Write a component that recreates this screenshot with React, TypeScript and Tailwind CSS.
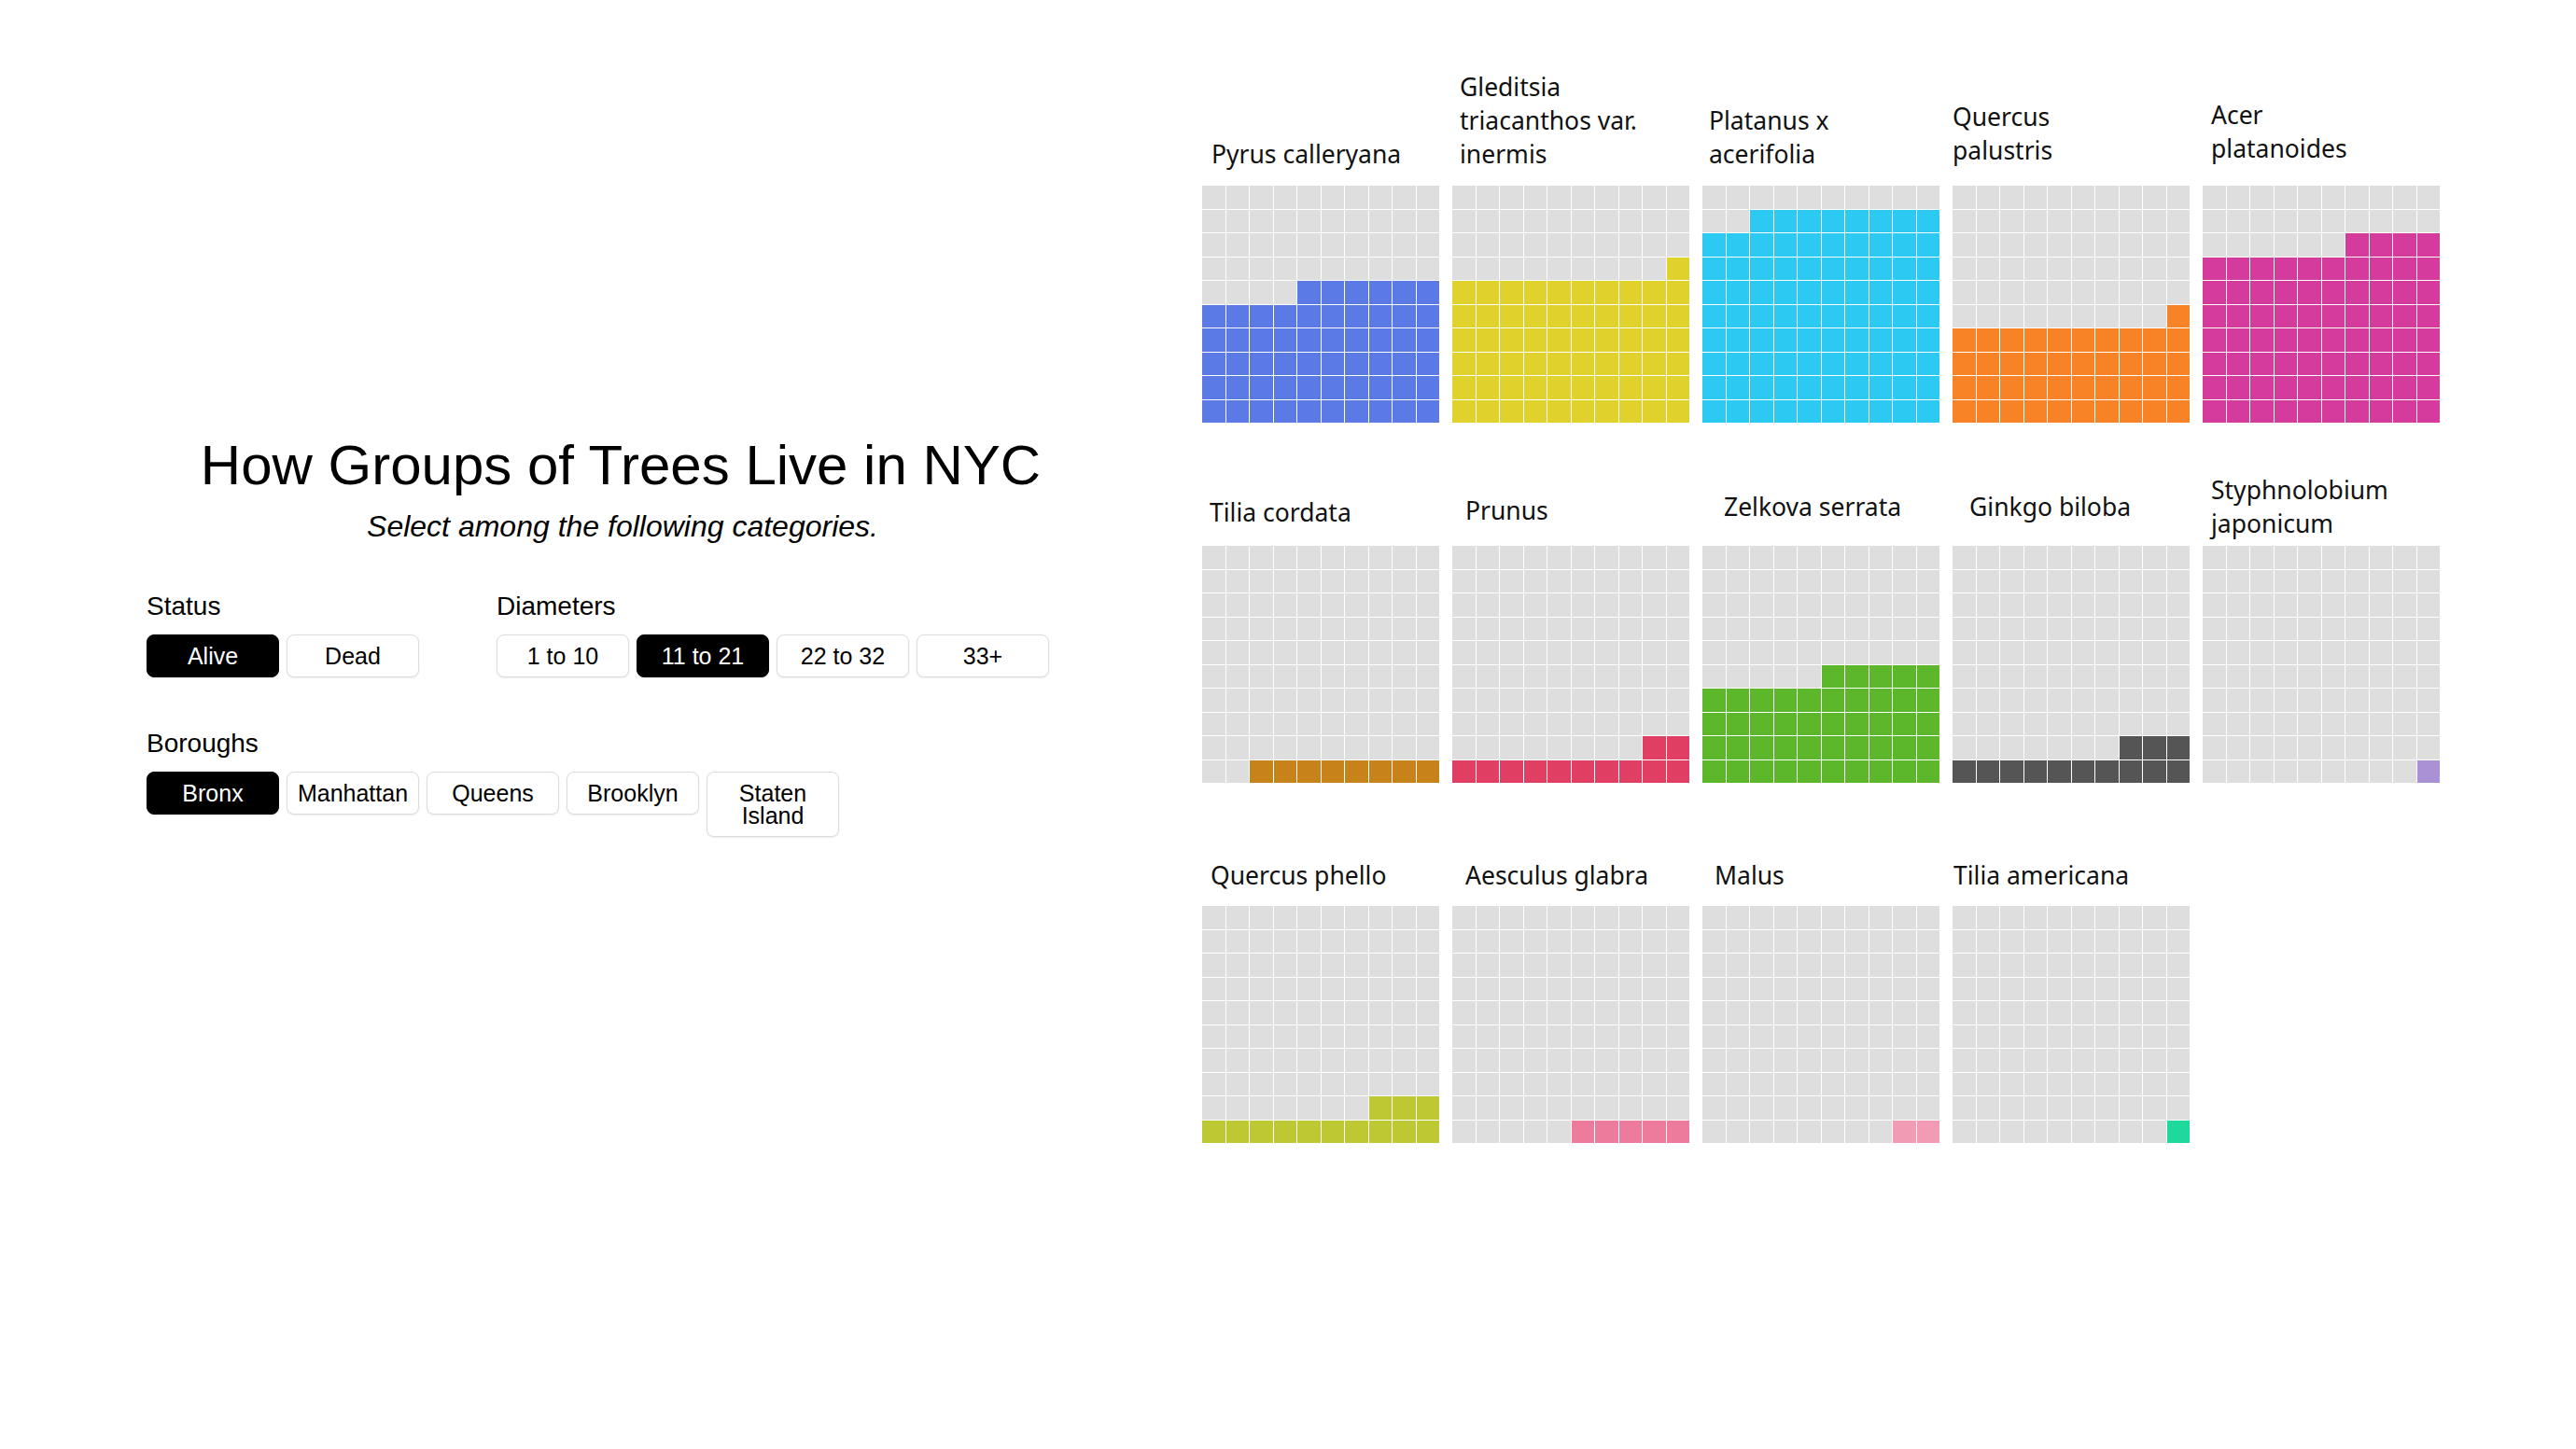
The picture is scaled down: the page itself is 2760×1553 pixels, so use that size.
import React from "react"

type Tree = {
  lines: string[]
  count: number
  fill: string
  labelClass: string
}

const trees: Tree[] = [
  { lines: ["Pyrus calleryana"], count: 56, fill: "bg-[#5b7ae6]", labelClass: "pl-[10px] mb-[16px]" },
  { lines: ["Gleditsia", "triacanthos var.", "inermis"], count: 61, fill: "bg-[#e0d12c]", labelClass: "pl-[8px] mb-[16px]" },
  { lines: ["Platanus x", "acerifolia"], count: 88, fill: "bg-[#2ccaf2]", labelClass: "pl-[7px] mb-[16px]" },
  { lines: ["Quercus", "palustris"], count: 41, fill: "bg-[#f88326]", labelClass: "pl-[0px] mb-[20px]" },
  { lines: ["Acer", "platanoides"], count: 74, fill: "bg-[#d53a9d]", labelClass: "pl-[9px] mb-[22px]" },
  { lines: ["Tilia cordata"], count: 8, fill: "bg-[#c8821a]", labelClass: "pl-[8px] mb-[18px]" },
  { lines: ["Prunus"], count: 12, fill: "bg-[#e03e62]", labelClass: "pl-[14px] mb-[20px]" },
  { lines: ["Zelkova serrata"], count: 45, fill: "bg-[#5cb82a]", labelClass: "pl-[23px] mb-[24px]" },
  { lines: ["Ginkgo biloba"], count: 13, fill: "bg-[#555555]", labelClass: "pl-[18px] mb-[24px]" },
  { lines: ["Styphnolobium", "japonicum"], count: 1, fill: "bg-[#aa90d4]", labelClass: "pl-[9px] mb-[6px]" },
  { lines: ["Quercus phello"], count: 13, fill: "bg-[#bec832]", labelClass: "pl-[9px] mb-[15px]" },
  { lines: ["Aesculus glabra"], count: 5, fill: "bg-[#ed7b9c]", labelClass: "pl-[14px] mb-[15px]" },
  { lines: ["Malus"], count: 2, fill: "bg-[#f29bb5]", labelClass: "pl-[13px] mb-[15px]" },
  { lines: ["Tilia americana"], count: 1, fill: "bg-[#1fd89b]", labelClass: "pl-[1px] mb-[15px]" },
]

const cells = Array.from({ length: 100 }, (_, i) => i)

function Waffle({ tree }: { tree: Tree }) {
  return (
    <div className="flex w-[254px] flex-col">
      <div className="flex h-[132px] flex-col justify-end">
        <div className={`text-[26.5px] leading-[36px] text-[#111] ${tree.labelClass}`}>
          {tree.lines.map((line) => (
            <div key={line}>{line}</div>
          ))}
        </div>
      </div>
      <div className="grid h-[254px] w-[254px] grid-cols-10 grid-rows-10 gap-px">
        {cells.map((i) => {
          const r = Math.floor(i / 10)
          const c = i % 10
          // fill from the bottom row up, right to left in the partial row
          const filled = (9 - r) * 10 + (9 - c) < tree.count
          return <div key={i} className={filled ? tree.fill : "bg-[#dedede]"} />
        })}
      </div>
    </div>
  )
}

function Pill({ label, active }: { label: string; active?: boolean }) {
  return (
    <button
      className={
        "w-[142px] rounded-[8px] border px-[10px] py-[10px] text-center text-[25px] leading-[24px] shadow-[0_1px_2px_rgba(0,0,0,0.08)] " +
        (active ? "border-black bg-black text-white" : "border-[#dcdcdc] bg-white text-black")
      }
    >
      {label}
    </button>
  )
}

function Group({ title, options, active }: { title: string; options: string[]; active: string }) {
  return (
    <div>
      <p className="text-[28px] leading-[32px] text-black">{title}</p>
      <div className="mt-[14px] flex items-start gap-[8px]">
        {options.map((o) => (
          <Pill key={o} label={o} active={o === active} />
        ))}
      </div>
    </div>
  )
}

export default function App() {
  return (
    <main className="flex h-[1553px] w-[2760px] bg-white font-['Liberation_Sans',Arial,sans-serif] text-black">
      <section className="w-[1288px] shrink-0 pl-[157px] pr-[115px] pt-[465px]">
        <div className="text-center">
          <h1 className="text-[60px] leading-[68px] font-normal">How Groups of Trees Live in NYC</h1>
          <p className="mt-[13px] pl-[4px] text-[32px] leading-[36px] italic">Select among the following categories.</p>
        </div>
        <div className="mt-[52px] flex gap-[83px]">
          <Group title="Status" options={["Alive", "Dead"]} active="Alive" />
          <Group title="Diameters" options={["1 to 10", "11 to 21", "22 to 32", "33+"]} active="11 to 21" />
        </div>
        <div className="mt-[55px]">
          <Group
            title="Boroughs"
            options={["Bronx", "Manhattan", "Queens", "Brooklyn", "Staten Island"]}
            active="Bronx"
          />
        </div>
      </section>

      <section className="pt-[67px] font-['Noto_Sans',sans-serif]">
        <div className="grid grid-cols-[repeat(5,254px)] gap-x-[14px]">
          {trees.map((t) => (
            <Waffle key={t.lines.join(" ")} tree={t} />
          ))}
        </div>
      </section>
    </main>
  )
}
